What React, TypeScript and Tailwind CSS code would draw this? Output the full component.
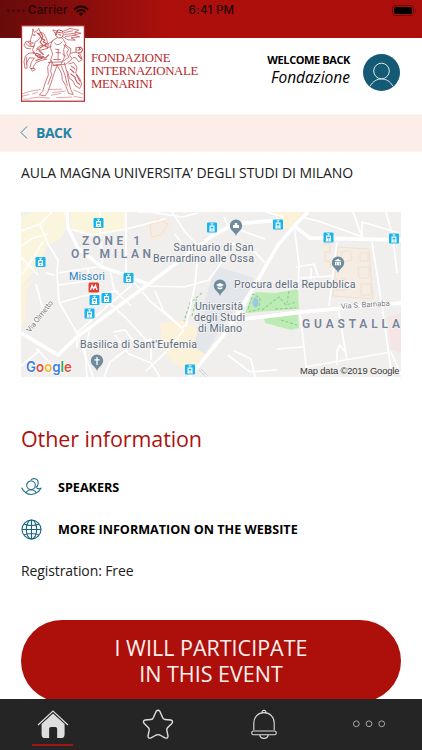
import { ReactNode } from "react";

const labelClass = "font-['Open_Sans',sans-serif]";

const tramStops = [
  [98.5, 223], [40.5, 262], [128.5, 278], [94.5, 300], [106.5, 298], [89.5, 313.5],
  [212, 227.5], [278, 224.5], [328.5, 237.5], [394, 238.5], [190, 369.5],
];

const minorRoads = [
  "M21 231 L40 224 L52 212 M21 246 L33 238 L48 234 M40 224 L48 244 L58 260",
  "M58 260 L57 273 L59 302 L77 333 L93 377 M43 242 L22 275 M36 284 L43 310",
  "M21 257 L38 275 M58 273 L103 266 M59 285 L88 281 M59 303 L83 296 L118 291",
  "M70 229 L91 235 L126 229 L165 219 M100 212 L100 230 L102 265 M126 212 L126 273",
  "M55 275 L46 273 M88 269 L90 299 M110 269 L114 290 L131 306",
  "M77 348 L77 333 L112 302 L132 285 M87 377 L85 350 L91 325",
  "M106 300 L126 318 L150 344 M126 273 L150 301 L182 328 L188 322",
  "M36 348 L60 373 M21 366 L40 350 M113 332 L125 330 L137 346 L151 339 L151 360",
  "M115 335 L129 354 L151 363 L160 377 M104 377 L110 362 L126 350",
  "M138 212 L150 212 L182 217 L198 213 M172 212 L185 232 L200 248",
  "M175 234 L197 264 L195 285 L186 326 M148 286 L184 287 L209 280",
  "M209 280 L221 263 L232 243 L255 252 L265 263 M155 291 L163 310 L184 330",
  "M224 217 L228 226 L265 239 M146 371 L164 354 L184 330 M228 355 L250 372 L277 370",
  "M234 351 L251 359 L255 377 M266 212 L284 217 M301 217 L318 221 L363 237",
  "M337 242 L329 306 M372 242 L382 306 L392 377 M294 225 L299 264 L298 290",
  "M353 212 L362 237 L362 222 L399 233 M386 212 L393 238 L397 273",
  "M300 313 L307 373 M338 308 L347 360 M305 367 L391 352 M277 349 L303 347",
  "M296 267 L314 264 L318 276 M311 268 L311 279 M298 278 L332 276",
  "M337 365 L337 351 L340 345 L345 352 M391 352 L401 375",
];

const majorRoads = [
  "M67 212 L68 228 L78 248 L102 267 L125 275 L150 285",
  "M21 333 L58 355 L77 337 L150 283 L212 236 L234 224 L280 220",
  "M189 377 L228 330 L255 285 L278 245 L298 222 L308 212",
  "M294 226 L310 238 L401 240",
  "M228 321 L301 312 L401 303",
];

type MapTextProps = { x: number; y: number; w: number; children: ReactNode; size?: number };

function MapText({ x, y, w, children, size = 10.6 }: MapTextProps) {
  return (
    <text x={x} y={y} textLength={w} fontSize={size} fill="#5d6b7b" stroke="#f5f5f5" strokeWidth={1.6} paintOrder="stroke">
      {children}
    </text>
  );
}

function Pin({ x, y, children }: { x: number; y: number; children: ReactNode }) {
  return (
    <g transform={`translate(${x} ${y})`}>
      <path d="M0 9 C-1 5 -6.2 3.5 -6.2 -1.4 A6.2 6.2 0 0 1 6.2 -1.4 C6.2 3.5 1 5 0 9Z" fill="#6f8b9d" />
      {children}
    </g>
  );
}

function VenueMap() {
  return (
    <svg viewBox="21 212 380 165" className="block h-[165px] w-[380px] font-[Roboto,sans-serif]" aria-label="Map of the venue">
      <rect x="21" y="212" width="380" height="165" fill="#f0efee" />
      {/* areas */}
      <path d="M21 216 L36 212 L66 212 L68 226 L60 239 L48 245 L37 268 L21 287Z M70 212 H126 V229 L99 235 L71 230Z" fill="#fcf5de" />
      <path d="M21 287 L34 278 L26 292 L25 323 L21 326Z M160 323 L183 320 L200 331 L212 344 L192 371 L175 365 L163 350Z M275 212 H305 L293 229 L277 227Z" fill="#fcf2d9" />
      <path d="M216 266 L254 278 L250 291 L223 325 L205 354 L194 347 L203 306Z" fill="#e3e6ea" />
      <path d="M145 224 L158 215 L173 223 L164 238 L151 242Z M322 243 L331 242 L330 269 L323 267Z M337 247 L370 249 L374 300 L332 297Z" fill="#f5ede3" />
      <g fill="none" stroke="#eeddc9" strokeWidth=".8">
        <path d="M150 225 L158 219 L168 224 L161 235 L152 237Z M341 252 L350 250 L352 260 L342 262Z M360 253 H368 V261 H360Z M358 267 H369 V278 H359Z M336 279 H346 V290 H336Z M361 284 H371 V295 H361Z M338 247 L369 249 L373 299 L333 296Z M323 244 H330 V252 H325 V261 H330 V268" />
      </g>
      <path d="M387 317 L401 313 V353 L391 349Z" fill="#f5e5e4" />
      <path d="M245 313 L251 298 L256 292 L275 293 L287 291 L298 289 L299 309Z M264 318 L298 314 L299 328 L291 330 L265 323Z" fill="#bdebb4" />
      <ellipse cx="255.5" cy="302.5" rx="3" ry="5" fill="#9cc7e3" />
      <g fill="none" stroke="#8bcf94" strokeWidth="1.1" strokeDasharray="3 1.8">
        <path d="M248 309 L253 294 L260 298 L259 309 L249 312 M262 310 L279 297 L286 305 L297 302 M275 309 L296 308 M281 320 L297 325 M289 291 L287 303" />
        <path d="M202 293 L190 303 L184 321 M192 316 L197 297" />
      </g>

      {/* streets */}
      <g fill="none" stroke="#fff" strokeLinejoin="round">
        {minorRoads.map((d) => <path key={d} d={d} strokeWidth="1.7" />)}
        {majorRoads.map((d) => <path key={d} d={d} stroke="#e9e9e9" strokeWidth="4.4" />)}
        {majorRoads.map((d) => <path key={d} d={d} strokeWidth="3.8" />)}
      </g>
      <path d="M199 370 L206 377 M201 369 L208 376" stroke="#999" strokeWidth=".7" strokeDasharray="1 1" />

      {tramStops.map(([x, y]) => (
        <g key={`${x}-${y}`} transform={`translate(${x} ${y})`}>
          <rect x="-5" y="-5" width="10" height="10" rx="1" fill="#18b4ee" />
          <path d="M-1.5 -3.7 H1.5 M0 -3.5 V-2" stroke="#fff" strokeWidth=".8" />
          <path fillRule="evenodd" d="M-2.5 -2 H2.5 V3 L3 4 H-3 L-2.5 3Z M-1.4 -.8 V1 H1.4 V-.8Z M-.6 2 H.6 V3 H-.6Z" fill="#fff" />
        </g>
      ))}
      <rect x="88.5" y="282.5" width="10.5" height="10" rx="1.5" fill="#e53a30" />
      <path d="M90.5 290 L92 285.5 L93.7 289 L95.5 285.5 L97 290" fill="none" stroke="#fff" strokeWidth="1.4" />

      {/* labels */}
      <g fontSize="12" fontWeight="600" fill="#76839c" stroke="#f5f3ee" strokeWidth="1.5" paintOrder="stroke">
        <text x="82" y="244.5" textLength="58">ZONE 1</text>
        <text x="71" y="257.5" textLength="80">OF MILAN</text>
        <text x="302" y="328" textLength="98">GUASTALLA</text>
      </g>
      <text x="69" y="279.5" textLength="36" fontSize="10.8" fill="#2f86bd" stroke="#f5f5f5" strokeWidth="1.4" paintOrder="stroke">Missori</text>
      <MapText x={173.5} y={250.5} w={80}>Santuario di San</MapText>
      <MapText x={153} y={262} w={101}>Bernardino alle Ossa</MapText>
      <MapText x={234} y={288} w={121.5}>Procura della Repubblica</MapText>
      <MapText x={195} y={310} w={48}>Università</MapText>
      <MapText x={194} y={321} w={51}>degli Studi</MapText>
      <MapText x={198} y={332} w={44}>di Milano</MapText>
      <MapText x={80} y={348} w={117}>Basilica di Sant'Eufemia</MapText>
      <g fontSize="7.8" fill="#777" stroke="#fff" strokeWidth="1.4" paintOrder="stroke">
        <text transform="translate(30 333) rotate(-52)" textLength="38">Via Olmetto</text>
        <text transform="translate(341 309) rotate(-4)" textLength="49">Via S. Barnaba</text>
      </g>

      <Pin x={236} y={227}>
        <path d="M-3 1 V-2 H-1.2 V-4 H1.2 V-2 H3 V1Z" fill="#fff" />
      </Pin>
      <Pin x={220} y={287}>
        <path d="M-4 -2 L0 -4 L4 -2 L0 0Z M-2.4 -.2 L0 1.1 L2.4 -.2 V1.4 L0 2.6 L-2.4 1.4Z" fill="#fff" />
      </Pin>
      <Pin x={338} y={264}>
        <path d="M-3.6 -3 L0 -5 L3.6 -3Z M-3 -2.2 H3 V1.3 H-3Z" fill="#fff" />
        <path d="M-1.3 -1.5 V.7 M1.3 -1.5 V.7" stroke="#6f8b9d" strokeWidth=".8" />
      </Pin>
      <Pin x={97} y={362}>
        <path d="M0 -5 V3 M-2.6 -2.2 H2.6" stroke="#fff" strokeWidth="1.3" />
      </Pin>

      <text x="26" y="372" textLength="46" lengthAdjust="spacingAndGlyphs" fontSize="14" fontWeight="600" stroke="#fff" strokeWidth="1.5" paintOrder="stroke" className="font-[Inter,sans-serif]">
        <tspan fill="#3f7ee8">G</tspan><tspan fill="#e34a3c">o</tspan><tspan fill="#f3b722">o</tspan><tspan fill="#3f7ee8">g</tspan><tspan fill="#35a353">l</tspan><tspan fill="#e34a3c">e</tspan>
      </text>
      <text x="300" y="374" textLength="99.5" fontSize="9.4" fill="#383838" className="font-['Liberation_Sans',sans-serif]">Map data ©2019 Google</text>
    </svg>
  );
}

function Logo() {
  return (
    <svg viewBox="0 0 192 230" className="-mt-[13px] block h-[77px] w-[64px]" aria-label="Fondazione Internazionale Menarini">
      <rect x="1.8" y="1.8" width="188.4" height="226.4" fill="#fff" stroke="#b22b2b" strokeWidth="3.6" />
      <g fill="none" stroke="#c4585b" strokeWidth="2.4" strokeLinecap="round" strokeLinejoin="round">
        {/* horse head and mane */}
        <path d="M36 12 L40 22 L49 16 L53 9 L57 20 L68 25 L76 40 L82 60 L79 70 M36 12 L34 27 L29 42 L27 59 L33 65 L40 61 L42 51 L52 45 L57 37" />
        <path d="M58 21 L66 34 L62 39 L72 45 L66 50 L77 55 L70 61 L79 66 M54 24 L63 43 L57 51 L68 62 L58 68 M48 23 L57 31 M37 29 L42 30 M32 53 L36 54" strokeWidth="3.4" />
        <path d="M29 48 L15 49 L9 60 L15 69 L29 71 M15 56 L23 63 L37 64 M40 61 L35 73 L38 86 M57 68 L45 76 M21 51 L31 58" />
        {/* forelegs */}
        <path d="M38 83 L24 84 L13 93 L9 110 L12 129 L18 129 L18 111 L25 98 L38 99 M17 96 L16 118 M41 98 L31 111 L27 127 L34 138 L43 133 L36 126 L45 112 L60 106 L78 102" />
        <path d="M38 81 L51 96 L73 99 L83 89 M46 84 L58 89 M54 76 L67 88 M44 91 L68 94 M45 106 L64 99 M31 130 L38 130" strokeWidth="3.4" />
        {/* wings and head */}
        <path d="M104 23 L113 14 L124 17 L127 29 L122 38 L112 38 L105 32Z M108 21 L121 23 M110 15 L106 29 M113 28 L119 30" strokeWidth="3" />
        <path d="M125 19 L147 10 L174 15 L161 21 L180 24 L158 30 L176 35 L150 38 L163 45 L141 44 L126 35 M130 22 L155 17 M131 28 L164 24 M133 34 L158 31 M102 24 L95 14 L108 18" />
        {/* torso */}
        <path d="M108 38 L94 47 L87 64 L95 87 L89 104 L98 120 L119 119 L130 97 L128 73 L134 55 L127 43 L122 38" />
        <path d="M94 48 L76 60 L59 61 L47 70 L57 75 L75 71 L91 63 M101 53 L106 59 L116 57 L123 51 M104 72 L114 74 M105 82 L119 83 M112 74 L111 105 M98 103 L118 103" />
        <path d="M128 59 L143 72 L137 84 L144 96 L124 110 L82 112 M133 59 L150 71 L146 91 L154 101 L135 117 L96 121 M125 87 L135 93" />
        {/* legs */}
        <path d="M90 105 L80 126 L82 150 L72 174 L65 199 L55 209 L72 212 L80 201 L90 174 L98 148 L109 119" />
        <path d="M108 119 L122 146 L124 164 L134 181 L143 205 L157 208 L149 193 L143 169 L139 145 L130 113 M93 114 L89 138 L92 148 L81 177 M121 122 L132 150 L139 180" />
        {/* hind part and tail */}
        <path d="M149 84 L165 81 L178 88 L184 103 L173 110 L165 98 L157 97 M144 116 L158 112 L168 126 L164 144 L176 160 L182 177 L176 190 L162 181 L156 167 L145 159 L140 139" />
        <path d="M165 80 L165 68 L179 66 L185 73 L180 83 L172 83 M172 91 L181 100 M151 123 L162 131 M148 132 L159 142 M149 146 L163 157 M162 159 L169 173 L176 177 M166 148 L177 168 M173 66 L178 73 L171 75" strokeWidth="3.2" />
        {/* ground */}
        <path d="M5 206 L28 198 L58 193 M4 213 L24 208 M34 207 L50 201 M84 193 L123 192 M158 194 L185 207 M27 219 L55 216 L86 219 M91 210 L119 205 M107 217 L153 216 M160 214 L184 218 M8 222 H25 M96 202 L132 198" strokeWidth="1.6" />
      </g>
    </svg>
  );
}

function StatusBar() {
  return (
    <div className="flex h-[38px] items-start bg-linear-to-r from-[#680b0b] to-[#ad100c] to-40% pt-[2px] font-[Inter,sans-serif] text-[11.5px] leading-[17px] font-medium text-[#240404]">
      <div className="flex flex-1 items-center pl-[7px]">
        <span className="mr-[3px] flex gap-[2px]">
          {[0, 1, 2, 3].map((i) => <span key={i} className="size-[3px] rounded-full bg-[#4c0808]" />)}
        </span>
        <span className="tracking-[0.2px]">Carrier</span>
        <svg viewBox="0 0 16 12" className="ml-[5px] h-[12px] w-[16px]" fill="none" stroke="#200303" strokeWidth="2">
          <path d="M1 4.5 Q8 -1.8 15 4.5 M3.5 7 Q8 3 12.5 7" />
          <path d="M5.5 8.5 Q8 6.7 10.5 8.5 L8 11Z" fill="#200303" stroke="none" />
        </svg>
      </div>
      <span className="tracking-[0.3px]">6:41 PM</span>
      <div className="flex flex-1 items-center justify-end pt-[3px] pr-[6px]">
        <span className="flex h-[11px] w-[22px] rounded-[3px] border border-[#6c0b09] p-px">
          <span className="flex-1 rounded-[2px] bg-black" />
        </span>
        <span className="ml-px h-[4px] w-[1.5px] rounded-r bg-[#6c0b09]" />
      </div>
    </div>
  );
}

function Header() {
  return (
    <header className="flex h-[76px] shrink-0 pl-[21px] pr-[22px]">
      <Logo />
      <div className="mt-[14px] ml-[6px] flex-1 font-['Liberation_Serif',serif] text-[12.8px] leading-[12.8px] whitespace-nowrap text-[#b52a2b]">
        <p className="tracking-[-0.33px]">FONDAZIONE</p>
        <p className="tracking-[-0.33px]">INTERNAZIONALE</p>
        <p className="tracking-[-0.33px]">MENARINI</p>
      </div>
      <div className={`mt-[14px] mr-[13px] text-right text-black ${labelClass}`}>
        <p className="text-[11px] leading-[16px] font-bold tracking-[-0.4px]">WELCOME BACK</p>
        <p className="text-[15.5px] leading-[19px] italic">Fondazione</p>
      </div>
      <svg viewBox="0 0 37 37" className="mt-[16px] size-[37px]" fill="none" stroke="#d9e9ee" strokeWidth="1">
        <circle cx="18.5" cy="18.5" r="18.5" fill="#145a75" stroke="none" />
        <circle cx="18.5" cy="17" r="7.8" />
        <path d="M7.3 32 C10 27 14 25 18.5 25 S27 27 29.7 32" />
      </svg>
    </header>
  );
}

function SpeakersIcon() {
  return (
    <svg viewBox="0 0 21 21" className="size-[21px]" fill="none" stroke="#236f86" strokeWidth="1.1" strokeLinecap="round">
      <circle cx="10" cy="8.3" r="4.3" />
      <path d="M10 3 C11.5 .8 17 1 17.2 5.5 C17.4 8 16.3 9.5 15 10.5 M5.2 16 C6 13.5 7.7 12.8 10 12.8 S14.2 13.5 15 16 M.8 11 C1.6 13 3 14.8 5 15.8 M15 15.8 C17.2 15.1 19 13.3 20 11 M16 11.4 L19.8 12 M5.2 16 C8 18 13 18 16 15.4" />
    </svg>
  );
}

function GlobeIcon() {
  return (
    <svg viewBox="0 0 21 21" className="size-[21px]" fill="none" stroke="#17647e" strokeWidth="1.1">
      <circle cx="10.5" cy="10.5" r="9.5" />
      <ellipse cx="10.5" cy="10.5" rx="5.2" ry="9.5" />
      <path d="M10.5 1 V20 M1 10.5 H20 M3 5 C7 7 14 7 18 5 M3 16 C7 14 14 14 18 16" />
    </svg>
  );
}

function InfoRow({ icon, text }: { icon: ReactNode; text: string }) {
  return (
    <div className="flex h-[41.5px] items-center">
      {icon}
      <span className="ml-[16px] pt-[2px] text-[12.6px] font-bold whitespace-nowrap text-black">{text}</span>
    </div>
  );
}

function TabBar() {
  return (
    <nav className="grid h-[51px] shrink-0 grid-cols-4 bg-[#252525] text-[#dedede]">
      <div className="flex flex-col items-center pt-[11px]">
        <svg viewBox="0 0 32 30" className="h-[29px] w-[32px]">
          <path d="M0.5 15.5 L16 1 L31.5 15.5" fill="none" stroke="currentColor" strokeWidth="1.2" />
          <path d="M16 3.5 L28 14.5 V25 Q28 29 24 29 H20.3 V19.5 Q20.3 17.5 18.3 17.5 H14 Q12 17.5 12 19.5 V29 H8 Q4.2 29 4.2 25 V14.5Z" fill="currentColor" />
        </svg>
        <span className="mt-[5px] h-[2px] w-[41px] bg-[#a01614]" />
      </div>
      <div className="flex justify-center pt-[10px]">
        <svg viewBox="0 0 32 31" className="h-[31px] w-[32px]" fill="none" stroke="currentColor" strokeWidth="1.4" strokeLinejoin="round">
          <path d="M14.2 2.2 Q16 .2 17.8 2.2 L20.8 9 Q21.4 10.4 23 10.5 L28.8 11 Q31.8 12 29.8 14.5 L25.5 18.7 Q24.5 19.8 24.8 21.2 L26 27 Q26 30 23 28.8 L17.8 26 Q16 25.2 14.2 26 L9 28.8 Q6 30 6 27 L7.2 21.2 Q7.5 19.8 6.5 18.7 L2.2 14.5 Q.2 12 3.2 11 L9 10.5 Q10.6 10.4 11.2 9Z" />
        </svg>
      </div>
      <div className="flex justify-center pt-[10px]">
        <svg viewBox="0 0 26 31" className="h-[31px] w-[26px]" fill="none" stroke="currentColor" strokeWidth="1.1">
          <path d="M2.8 21 V14 C2.8 8 7 3.6 13 3.6 S23.2 8 23.2 14 V21 M11 3.8 C10.8 .5 15.2 .5 15 3.8 M8.7 25.8 C9.5 30.5 16.5 30.5 17.3 25.8" />
          <rect x=".7" y="22" width="24.6" height="3.8" rx="1.9" />
        </svg>
      </div>
      <div className="flex justify-center pt-[21px]">
        <svg viewBox="0 0 34 8" className="h-[8px] w-[34px]" fill="none" stroke="#a8a8a8" strokeWidth="1">
          <circle cx="4.3" cy="3.8" r="2.9" />
          <circle cx="17" cy="3.8" r="2.9" />
          <circle cx="29.7" cy="3.8" r="2.9" />
        </svg>
      </div>
    </nav>
  );
}

export default function App() {
  return (
    <div className={`flex h-[750px] w-[422px] flex-col overflow-hidden bg-white text-[#202020] ${labelClass}`}>
      <StatusBar />
      <Header />
      <button className="flex h-[38px] shrink-0 items-center border-y border-[#fdf4f1] bg-[#fcede8] pl-[20px] pb-px text-[#2685a6]">
        <svg viewBox="0 0 8 13" className="h-[13px] w-[8px]" fill="none" stroke="currentColor" strokeWidth="1">
          <path d="M7 .5 L1 6.5 L7 12.5" />
        </svg>
        <span className="ml-[8px] text-[14px] font-bold tracking-[-0.5px]">BACK</span>
      </button>

      <main className="min-h-0 flex-1 overflow-hidden px-[21px]">
        <h1 className="mt-[11px] mb-[29px] text-[14px] leading-[20px] tracking-[-0.07px] whitespace-nowrap">AULA MAGNA UNIVERSITA’ DEGLI STUDI DI MILANO</h1>
        <VenueMap />
        <h2 className="mt-[47px] text-[21.5px] leading-[30px] tracking-[-0.1px] text-[#ad120f]">Other information</h2>
        <div className="mt-[13px]">
          <InfoRow icon={<SpeakersIcon />} text="SPEAKERS" />
          <InfoRow icon={<GlobeIcon />} text="MORE INFORMATION ON THE WEBSITE" />
        </div>
        <p className="mt-[11px] text-[14px] leading-[20px] tracking-[-0.1px]">Registration: Free</p>
        <button className="mt-[39px] h-[82px] w-[380px] rounded-full bg-[#ad0f0a] text-[21.5px] leading-[26px] text-[#fff0ee]">
          <span className="block">I WILL PARTICIPATE</span>
          <span className="block">IN THIS EVENT</span>
        </button>
      </main>
      <TabBar />
    </div>
  );
}
